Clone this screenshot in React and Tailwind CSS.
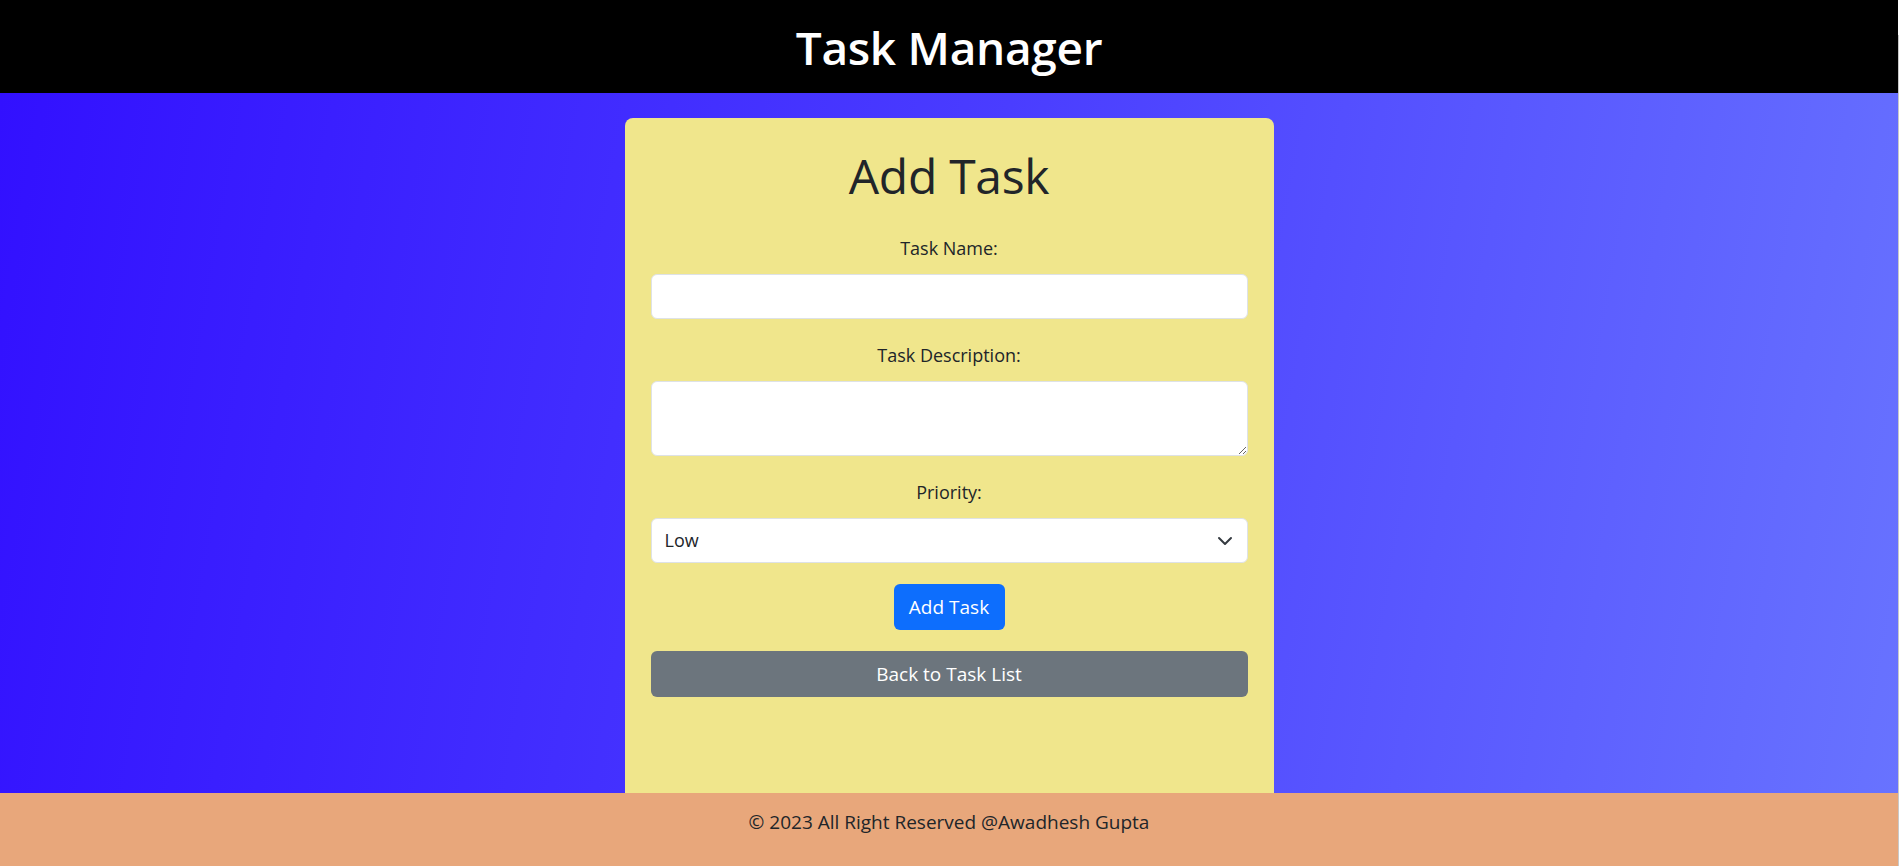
export default function App() {
  const font = { fontFamily: '"Open Sans", "Noto Sans", sans-serif' };
  return (
    <div className="flex h-[866px] w-full overflow-hidden" style={font}>
      <div className="flex h-full flex-1 flex-col overflow-hidden">
        <header className="flex h-[93px] shrink-0 items-center justify-center bg-black">
          <h1 className="text-[46px] font-semibold leading-none tracking-[-0.3px] text-white">Task Manager</h1>
        </header>
        <main className="flex flex-1 justify-center overflow-hidden bg-[linear-gradient(100deg,#3210ff_0%,#4a3dff_50%,#6873ff_100%)] pt-[25px]">
          <div className="flex h-[700px] w-[649px] flex-col rounded-t-[8px] bg-[#f0e68c] px-[26px] pt-[29px] text-[#212529]">
            <h2 className="h-[58px] text-center text-[48px] font-medium leading-[58px] tracking-[-0.3px]">Add Task</h2>
            <label className="mt-[29px] block h-[29px] text-center text-[18px] leading-[29px]">Task Name:</label>
            <input
              type="text"
              className="mt-[11px] h-[45px] w-full rounded-[6px] border border-[#dee2e6] bg-white px-[14px] text-[18px] outline-none"
            />
            <label className="mt-[22px] block h-[29px] text-center text-[18px] leading-[29px]">Task Description:</label>
            <textarea className="mt-[11px] block h-[75px] w-full resize-y rounded-[6px] border border-[#dee2e6] bg-white px-[14px] py-[7px] text-[18px] outline-none" />
            <label className="mt-[22px] block h-[29px] text-center text-[18px] leading-[29px]">Priority:</label>
            <div className="relative mt-[11px] flex h-[45px] w-full items-center rounded-[6px] border border-[#dee2e6] bg-white px-[13px]">
              <span className="text-[18px] text-[#212529]">Low</span>
              <svg
                className="absolute right-[14px] top-1/2 -translate-y-1/2"
                width="16"
                height="16"
                viewBox="0 0 16 16"
                fill="none"
                stroke="#343a40"
                strokeWidth="2"
                strokeLinecap="round"
                strokeLinejoin="round"
              >
                <path d="m2 5 6 6 6-6" />
              </svg>
            </div>
            <div className="mt-[21px] flex justify-center">
              <button className="h-[46px] w-[111px] rounded-[6px] bg-[#0d6efd] text-[19px] text-white">Add Task</button>
            </div>
            <button className="mt-[21px] h-[46px] w-full rounded-[6px] bg-[#6c757d] text-[19px] text-white">Back to Task List</button>
          </div>
        </main>
        <footer className="flex h-[73px] shrink-0 justify-center bg-[#e8a77b] pt-[15px] text-[19px] leading-[28px] text-[#212529]">
          © 2023 All Right Reserved @Awadhesh Gupta
        </footer>
      </div>
      <div className="flex h-full w-[3px] shrink-0 bg-white">
        <div className="mt-[35px] h-full w-[1px] bg-[#c8c8c8]" />
      </div>
    </div>
  );
}
